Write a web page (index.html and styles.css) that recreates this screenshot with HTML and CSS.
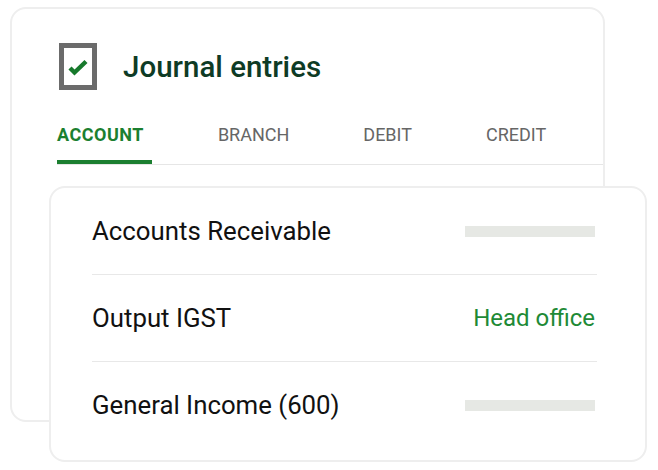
FILE: index.html
```html
<!DOCTYPE html>
<html lang="en">
<head>
    <meta charset="UTF-8">
    <meta name="viewport" content="width=device-width, initial-scale=1.0">
    <title>Journal entries</title>
    <link rel="stylesheet" href="styles.css">
</head>
<body>
    <div class="stage">
        <div class="card back-card">
            <div class="card-head">
                <svg class="check-box" width="38" height="47" viewBox="0 0 38 47">
                    <rect x="2.5" y="2.5" width="33" height="42" fill="#fff" stroke="#6b6b6b" stroke-width="5"/>
                    <path d="M11 25 L15.5 29.5 L27 18.5" fill="none" stroke="#17792c" stroke-width="4.4"/>
                </svg>
                <h1>Journal entries</h1>
            </div>
            <div class="tabs">
                <span class="tab active">ACCOUNT</span>
                <span class="tab">BRANCH</span>
                <span class="tab">DEBIT</span>
                <span class="tab">CREDIT</span>
            </div>
        </div>
        <div class="card front-card">
            <div class="row">
                <span class="label">Accounts Receivable</span>
                <span class="placeholder"></span>
            </div>
            <div class="row">
                <span class="label">Output IGST</span>
                <span class="value">Head office</span>
            </div>
            <div class="row">
                <span class="label">General Income (600)</span>
                <span class="placeholder"></span>
            </div>
        </div>
    </div>
</body>
</html>
```

FILE: styles.css
```css
body {
    font-family: Roboto, "Liberation Sans", sans-serif;
    margin: 0;
    padding: 0;
    background-color: #fff;
}
.stage {
    display: grid;
    width: 658px;
    height: 470px;
}
.card {
    grid-area: 1 / 1;
    box-sizing: border-box;
    background: #fff;
    border: 2px solid #eeeeee;
    border-radius: 16px;
}
.back-card {
    margin: 7px 0 0 10px;
    width: 595px;
    height: 415px;
    padding: 34px 0 0 45px;
}
.card-head {
    display: flex;
    align-items: center;
    gap: 26px;
    padding-left: 2px;
}
.check-box {
    display: block;
}
.card-head h1 {
    margin: 0;
    font-size: 29.5px;
    font-weight: 500;
    color: #0e3b25;
}
.tabs {
    display: flex;
    gap: 66px;
    margin-top: 34px;
    border-bottom: 1px solid #e6e6e6;
}
.tab {
    font-size: 18px;
    line-height: 22px;
    color: #666;
    padding: 0 8px 14px 0;
    border-bottom: 4px solid transparent;
}
.tab.active {
    color: #1b7f30;
    font-weight: 700;
    letter-spacing: 0.5px;
    border-bottom-color: #1b7f30;
}
.front-card {
    z-index: 1;
    margin: 186px 0 0 49px;
    width: 598px;
    height: 276px;
    padding: 0 48px 0 41px;
}
.row {
    display: flex;
    align-items: center;
    justify-content: space-between;
    height: 86px;
    border-bottom: 1px solid #e8e8e8;
    padding-right: 2px;
}
.row:last-child {
    border-bottom: none;
}
.label {
    font-size: 25.8px;
    color: #111;
}
.value {
    font-size: 24px;
    color: #1e8a36;
}
.placeholder {
    width: 130px;
    height: 11px;
    background-color: #e6e8e4;
}
```
